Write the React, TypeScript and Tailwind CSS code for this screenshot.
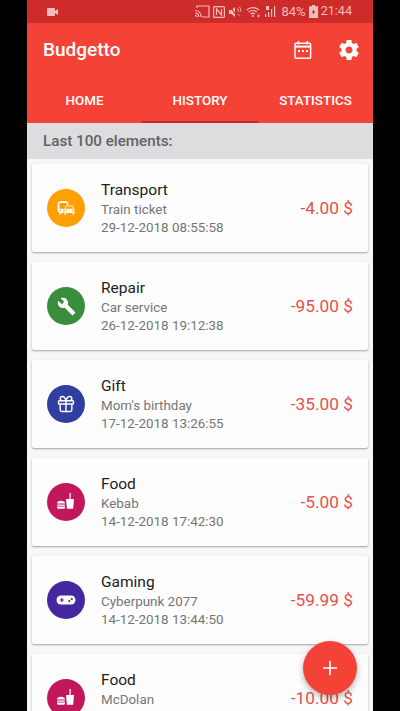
import { Gift, Plus } from "lucide-react";
import type { ReactNode } from "react";

const commute =
  "M12 4H5C3.34 4 2 5.34 2 7v8c0 1.66 1.34 3 3 3l-1 1v1h1l2-2.03L9 18v-5H4V5.98L13 6v2h2V7c0-1.66-1.34-3-3-3zM5 14c.55 0 1 .45 1 1s-.45 1-1 1-1-.45-1-1 .45-1 1-1zm15.57-4.34c-.14-.4-.52-.66-.97-.66h-7.19c-.46 0-.83.26-.98.66L10 13.77l.01 5.51c0 .38.31.72.69.72h.62c.38 0 .68-.38.68-.76V18h8v1.24c0 .38.31.76.69.76h.61c.38 0 .69-.34.69-.72l.01-1.37v-4.14l-1.43-4.07zm-8.16.34h7.19l1.03 3h-9.25l1.03-3zM12 16c-.55 0-1-.45-1-1s.45-1 1-1 1 .45 1 1-.45 1-1 1zm8 0c-.55 0-1-.45-1-1s.45-1 1-1 1 .45 1 1-.45 1-1 1z";
const wrench =
  "M22.7 19l-9.1-9.1c.9-2.3.4-5-1.5-6.9-2-2-5-2.4-7.4-1.3L9 6 6 9 1.6 4.7C.4 7.1.9 10.1 2.9 12.1c1.9 1.9 4.6 2.4 6.9 1.5l9.1 9.1c.4.4 1 .4 1.4 0l2.3-2.3c.5-.4.5-1.1.1-1.4z";
const gear =
  "M19.43 12.98c.04-.32.07-.64.07-.98s-.03-.66-.07-.98l2.11-1.65c.19-.15.24-.42.12-.64l-2-3.46c-.12-.22-.39-.3-.61-.22l-2.49 1c-.52-.4-1.08-.73-1.69-.98l-.38-2.65C14.46 2.18 14.25 2 14 2h-4c-.25 0-.46.18-.49.42l-.38 2.65c-.61.25-1.17.59-1.69.98l-2.49-1c-.23-.09-.49 0-.61.22l-2 3.46c-.13.22-.07.49.12.64l2.11 1.65c-.04.32-.07.65-.07.98s.03.66.07.98l-2.11 1.65c-.19.15-.24.42-.12.64l2 3.46c.12.22.39.3.61.22l2.49-1c.52.4 1.08.73 1.69.98l.38 2.65c.03.24.24.42.49.42h4c.25 0 .46-.18.49-.42l.38-2.65c.61-.25 1.17-.59 1.69-.98l2.49 1c.23.09.49 0 .61-.22l2-3.46c.12-.22.07-.49-.12-.64l-2.11-1.65zM12 15.5c-1.93 0-3.5-1.57-3.5-3.5s1.57-3.5 3.5-3.5 3.5 1.57 3.5 3.5-1.57 3.5-3.5 3.5z";

function Icon({ d, size = 20 }: { d: string; size?: number }) {
  return (
    <svg width={size} height={size} viewBox="0 0 24 24" fill="#fff">
      <path d={d} />
    </svg>
  );
}

function FoodIcon() {
  return (
    <svg width={20} height={20} viewBox="0 0 20 20" fill="#fff">
      <path d="M1 11.500c0-1.700 1.600-2.700 4-2.700s4 1 4 2.700H1z" />
      <rect x="1" y="12.400" width="8" height="1.300" rx=".6" />
      <path d="M1 14.500h8v1c0 .7-.5 1.200-1.200 1.200H2.200c-.7 0-1.200-.5-1.200-1.200v-1z" />
      <path d="M10 7h8l-.9 9.800h-6.200L10 7z" />
      <path d="M13.500 7V1h1.200v6h-1.200z" />
    </svg>
  );
}

function GamepadIcon() {
  return (
    <svg width={22} height={22} viewBox="0 0 22 22">
      <rect x="1.500" y="6.500" width="19" height="9" rx="4.500" fill="#fff" />
      <path d="M4.800 10.400h1.400V9h1.200v1.400h1.400v1.200H7.400V13H6.200v-1.400H4.800z" fill="#4527a0" />
      <circle cx="14.300" cy="12" r="1.100" fill="#4527a0" />
      <circle cx="16.800" cy="10" r="1.100" fill="#4527a0" />
    </svg>
  );
}

function CalendarIcon() {
  return (
    <svg width={20} height={20} viewBox="0 0 20 20" fill="none" stroke="#fff" strokeWidth="1.500">
      <rect x="2" y="3.200" width="15.600" height="15" rx="1" />
      <path d="M2 6.600h15.600" strokeWidth="2" />
      <path d="M5.400 1v3.400M14.200 1v3.400" />
      <path d="M5 11h2M9 11h2M13 11h2" strokeWidth="1.800" />
    </svg>
  );
}

function StatusIcons() {
  return (
    <div className="flex items-center text-[#f3bdbc]">
      {/* cast */}
      <svg width={16} height={13} viewBox="0 0 16 13" fill="none" stroke="currentColor" strokeWidth="1.200">
        <path d="M3 3V1h12v11H8" />
        <path d="M1 5.500c3.500 0 6 2.500 6 6.500M1 8c2.200 0 3.800 1.700 3.800 4M1 10.300c1 0 1.700.7 1.700 1.700" />
      </svg>
      {/* nfc */}
      <svg width={12} height={12} viewBox="0 0 12 12" fill="none" stroke="currentColor" strokeWidth="1.200" className="ml-[3px]">
        <rect x=".6" y=".6" width="10.800" height="10.800" rx="1" />
        <path d="M3.500 9V3l5 6V3" />
      </svg>
      {/* muted */}
      <svg width={13} height={12} viewBox="0 0 13 12" fill="currentColor" className="ml-[4px]">
        <path d="M0 4h2.500L6 1v10L2.500 8H0z" />
        <path d="M1 .5l7.500 10.500" stroke="#ce2c2b" strokeWidth="1.100" />
        <path d="M8.500 2.500c1 1 1 2 .3 3M10.500 1c1.500 1.700 1.500 3.500.5 5M8.800 8l1.500 1.500" fill="none" stroke="currentColor" strokeWidth="1" />
      </svg>
      {/* wifi */}
      <svg width={15} height={12} viewBox="0 0 15 12" fill="none" stroke="currentColor" strokeWidth="1.100" className="ml-[4px]">
        <path d="M.7 4C4 .8 9.500.8 12.800 4M2.700 6c2.300-2 5.800-2 8 0M4.700 8c1.200-1 3-1 4.200 0" />
        <circle cx="6.800" cy="10" r="1" fill="currentColor" stroke="none" />
        <path d="M12.500 8.500v3M11 10h3" strokeWidth=".8" />
      </svg>
      {/* signal */}
      <svg width={11} height={13} viewBox="0 0 11 13" fill="currentColor" className="ml-[4px]">
        <rect x="0" y="9" width="1.200" height="3" />
        <rect x="3" y="7" width="1.200" height="5" />
        <rect x="6" y="4" width="1.200" height="8" />
        <rect x="9" y="1" width="1.200" height="11" />
        <rect x="1" y="1" width="3" height="4" />
      </svg>
      <span className="ml-[5px] text-[13px] leading-none">84%</span>
      {/* battery */}
      <svg width={9} height={13} viewBox="0 0 9 13" className="ml-[3px]">
        <path d="M3 0h3v1.200h3V13H0V1.200h3z" fill="currentColor" />
        <path d="M5 4L3 7.500h1.500L4 10l2-3.500H4.500z" fill="#5a1515" />
      </svg>
      <span className="ml-[3px] text-[12.6px] leading-none">21:44</span>
    </div>
  );
}

type Item = {
  title: string;
  note: string;
  date?: string;
  amount: string;
  color: string;
  icon: ReactNode;
};

const items: Item[] = [
  { title: "Transport", note: "Train ticket", date: "29-12-2018 08:55:58", amount: "-4.00 $", color: "bg-[#ffa000]", icon: <Icon d={commute} /> },
  { title: "Repair", note: "Car service", date: "26-12-2018 19:12:38", amount: "-95.00 $", color: "bg-[#388e3c]", icon: <Icon d={wrench} size={19} /> },
  { title: "Gift", note: "Mom's birthday", date: "17-12-2018 13:26:55", amount: "-35.00 $", color: "bg-[#303f9f]", icon: <Gift size={20} color="#fff" strokeWidth={1.7} /> },
  { title: "Food", note: "Kebab", date: "14-12-2018 17:42:30", amount: "-5.00 $", color: "bg-[#c2185b]", icon: <FoodIcon /> },
  { title: "Gaming", note: "Cyberpunk 2077", date: "14-12-2018 13:44:50", amount: "-59.99 $", color: "bg-[#4527a0]", icon: <GamepadIcon /> },
  // last row runs off the bottom of the screen, its date is never visible
  { title: "Food", note: "McDolan", amount: "-10.00 $", color: "bg-[#c2185b]", icon: <FoodIcon /> },
];

function HistoryCard({ item }: { item: Item }) {
  return (
    <div className="flex h-[88px] shrink-0 items-center rounded-[2px] bg-[#fefdfe] px-[15px] shadow-[0_1px_2px_rgba(0,0,0,0.35)]">
      <div className={`flex h-[38px] w-[38px] shrink-0 items-center justify-center rounded-full ${item.color}`}>
        {item.icon}
      </div>
      <div className="ml-[16px] flex flex-1 flex-col">
        <span className="text-[15.5px] leading-[20px] text-[#212121]">{item.title}</span>
        <span className="text-[13.4px] leading-[19px] text-[#757575]">{item.note}</span>
        <span className="min-h-[18px] text-[13.4px] leading-[18px] text-[#757575]">{item.date}</span>
      </div>
      <span className="mt-[2px] text-[17.3px] text-[#e5514c]">{item.amount}</span>
    </div>
  );
}

export default function App() {
  return (
    <div className="flex h-[711px] w-[400px] justify-center overflow-hidden bg-black font-['Roboto',sans-serif]">
      <div className="relative flex h-full w-[346px] flex-col overflow-hidden bg-[#f7f6f8]">
        {/* Status bar */}
        <div className="flex h-[23px] shrink-0 items-center justify-between bg-[#ce2c2b] pl-[20px] pr-[21px]">
          <svg width={11} height={8} viewBox="0 0 11 8" fill="#f3bdbc">
            <rect width="8" height="8" rx="1" />
            <path d="M8 3l3-2v6L8 5z" />
          </svg>
          <StatusIcons />
        </div>

        {/* Toolbar */}
        <div className="flex h-[56px] shrink-0 items-center justify-between bg-[#f44336] pb-[2px] pl-[16px] pr-[12px] text-white">
          <span className="text-[19px] font-medium">Budgetto</span>
          <div className="flex items-center gap-[24px]">
            <CalendarIcon />
            <Icon d={gear} size={24} />
          </div>
        </div>

        {/* Tabs */}
        <div className="flex h-[44px] shrink-0 bg-[#f44336] text-[13.4px] font-medium text-white shadow-[0_1px_3px_rgba(0,0,0,0.25)]">
          <div className="flex w-[115px] items-center justify-center">HOME</div>
          <div className="flex w-[116px] items-center justify-center border-b-2 border-[#c62828] pt-[2px]">HISTORY</div>
          <div className="flex w-[115px] items-center justify-center">STATISTICS</div>
        </div>

        {/* Subheader */}
        <div className="flex h-[36px] shrink-0 items-center bg-[#dddcdf] pl-[16px] text-[15.2px] font-medium text-[#626166]">
          Last 100 elements:
        </div>

        {/* List */}
        <div className="flex flex-col gap-[10px] px-[5px] pt-[5px]">
          {items.map((item, i) => (
            <HistoryCard key={i} item={item} />
          ))}
        </div>

        {/* FAB */}
        <div className="absolute bottom-[16px] right-[16px] flex h-[54px] w-[54px] items-center justify-center rounded-full bg-[#f44336] shadow-[0_3px_6px_rgba(0,0,0,0.3)]">
          <Plus size={22} color="#fff" strokeWidth={1.8} />
        </div>
      </div>
    </div>
  );
}
